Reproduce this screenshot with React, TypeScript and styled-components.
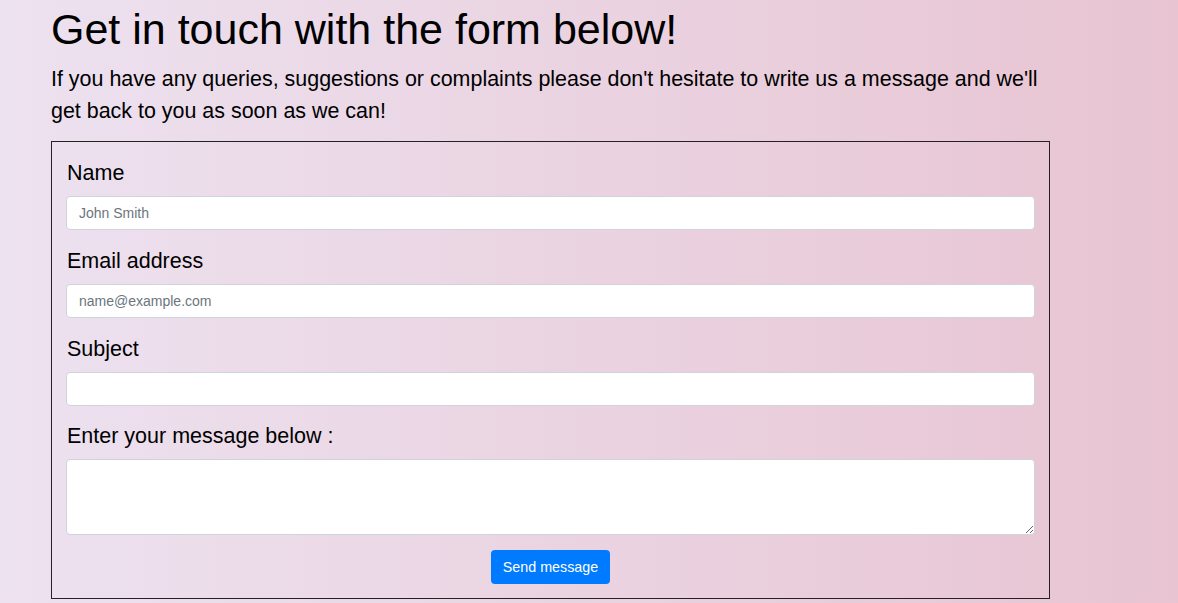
import React from "react";
import styled, { createGlobalStyle } from "styled-components";

const GlobalStyle = createGlobalStyle`
  html, body {
    margin: 0;
    padding: 0;
    min-height: 100%;
  }
  body {
    font-family: "Liberation Sans", Arial, sans-serif;
    color: #000;
    background: linear-gradient(to right, #ede2f0 0%, #e8c4d2 100%);
    min-height: 603px;
  }
  * { box-sizing: border-box; }
`;

const Page = styled.main`
  width: 999px;
  margin-left: 51px;
  padding-top: 4px;
`;

const Title = styled.h1`
  margin: 0 0 9px;
  font-size: 43px;
  line-height: 50px;
  font-weight: 400;
`;

const Lead = styled.p`
  margin: 0 0 14px;
  font-size: 21.45px;
  line-height: 32px;
`;

const FormBox = styled.form`
  border: 1px solid #222;
  padding: 15px 14px 14px;
  display: flex;
  flex-direction: column;
`;

const Group = styled.div<{ $tight?: boolean }>`
  display: flex;
  flex-direction: column;
  margin-bottom: ${(p) => (p.$tight ? "14px" : "15px")};
`;

const Label = styled.label`
  font-size: 21.5px;
  line-height: 30px;
  padding: 1px 0 0 1px;
  margin-bottom: 8px;
`;

const Input = styled.input`
  height: 34px;
  width: 100%;
  border: 1px solid #ced4da;
  border-radius: 4px;
  background: #fff;
  padding: 6px 12px;
  font-family: "Liberation Sans", Arial, sans-serif;
  font-size: 14px;
  color: #495057;
  outline: none;
  &::placeholder { color: #6c757d; }
`;

const TextArea = styled.textarea`
  height: 76px;
  width: 100%;
  border: 1px solid #ced4da;
  border-radius: 4px;
  background: #fff;
  padding: 6px 12px;
  font-family: "Liberation Sans", Arial, sans-serif;
  font-size: 14px;
  resize: vertical;
  outline: none;
  display: block;
`;

const Actions = styled.div`
  display: flex;
  justify-content: center;
`;

const Button = styled.button`
  height: 34px;
  padding: 0 12px;
  border: none;
  border-radius: 4px;
  background: #007bff;
  color: #fff;
  font-family: "Liberation Sans", Arial, sans-serif;
  font-size: 14.3px;
  cursor: pointer;
`;

export default function App() {
  return (
    <>
      <GlobalStyle />
      <Page>
        <Title>Get in touch with the form below!</Title>
        <Lead>
          If you have any queries, suggestions or complaints please don't hesitate to write us a
          message and we'll get back to you as soon as we can!
        </Lead>
        <FormBox onSubmit={(e) => e.preventDefault()}>
          <Group>
            <Label htmlFor="name">Name</Label>
            <Input id="name" type="text" placeholder="John Smith" />
          </Group>
          <Group>
            <Label htmlFor="email">Email address</Label>
            <Input id="email" type="email" placeholder="name@example.com" />
          </Group>
          <Group $tight>
            <Label htmlFor="subject">Subject</Label>
            <Input id="subject" type="text" />
          </Group>
          <Group>
            <Label htmlFor="message">Enter your message below :</Label>
            <TextArea id="message" />
          </Group>
          <Actions>
            <Button type="submit">Send message</Button>
          </Actions>
        </FormBox>
      </Page>
    </>
  );
}
